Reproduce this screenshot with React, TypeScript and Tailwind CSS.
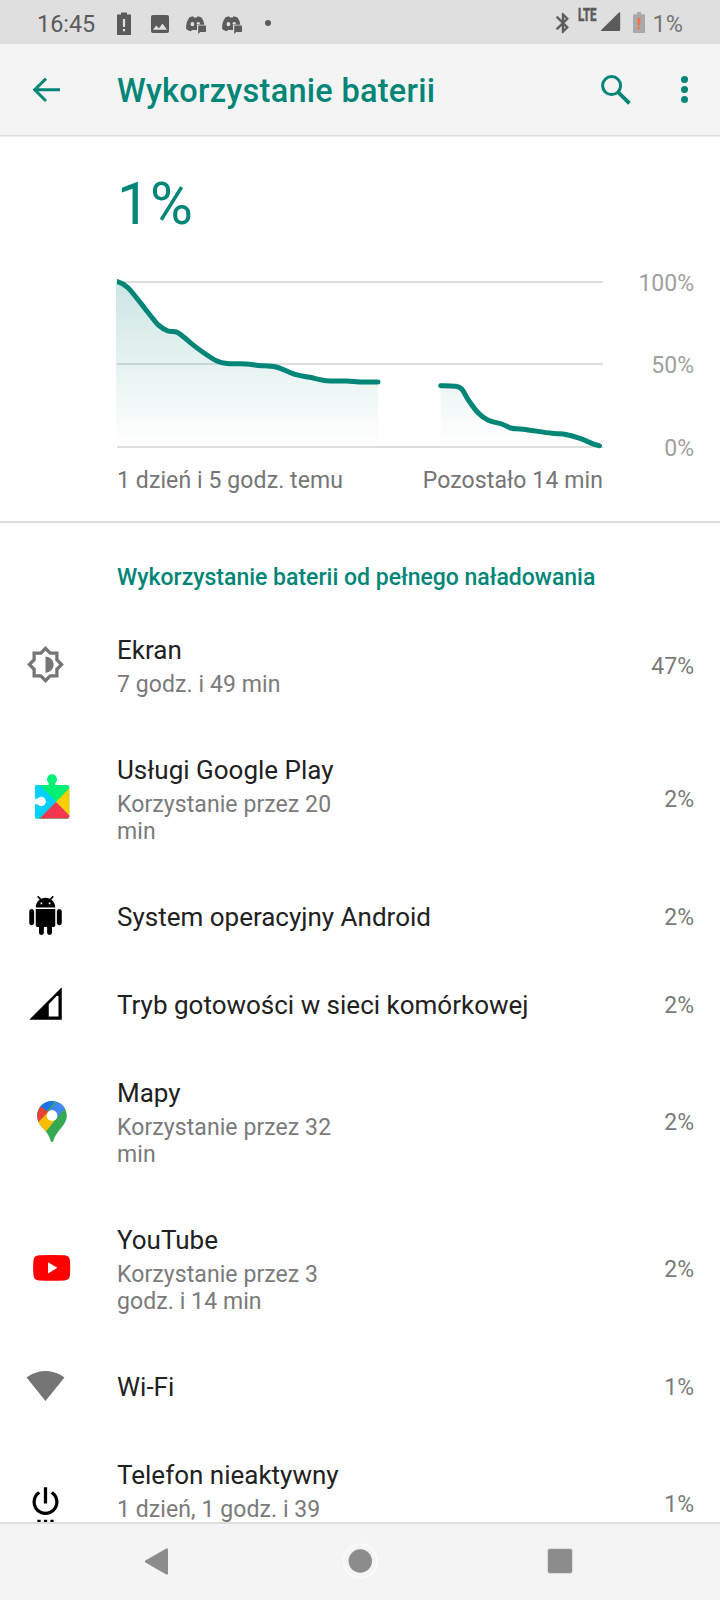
import type { ReactNode } from "react";

type Point = [number, number];

const firstRun: Point[] = [
  [0, 5.2], [12, 11.7], [32, 36.5], [42.5, 49.2], [52, 55], [62, 56.7], [74, 66.4], [87, 76.3],
  [100.5, 84.8], [111, 87.6], [130, 87.9], [142.5, 89.5], [160, 91], [179, 98.4], [194, 101.3],
  [210.5, 104.7], [230.5, 105], [244, 106], [262, 106],
];

const secondRun: Point[] = [
  [324.7, 109.7], [339, 110.2], [345.7, 113], [352.3, 124], [362.3, 137], [372.3, 144.3],
  [385.7, 148], [395.7, 152.3], [407.3, 153.3], [435.7, 157.3], [447.3, 158], [464, 162.3],
  [475.7, 167.3], [483.5, 169.8],
];

function curve(points: Point[]): string {
  let d = `M${points[0][0]} ${points[0][1]}`;
  for (let i = 0; i < points.length - 1; i++) {
    const a = points[Math.max(i - 1, 0)];
    const b = points[i];
    const c = points[i + 1];
    const e = points[Math.min(i + 2, points.length - 1)];
    d += `C${b[0] + (c[0] - a[0]) / 6} ${b[1] + (c[1] - a[1]) / 6} ${c[0] - (e[0] - b[0]) / 6} ${
      c[1] - (e[1] - b[1]) / 6
    } ${c[0]} ${c[1]}`;
  }
  return d;
}

function area(points: Point[]): string {
  return `${curve(points)}V170H${points[0][0]}Z`;
}

function Glyph({ d, className }: { d: string; className: string }) {
  return (
    <svg viewBox="0 0 24 24" className={`block h-[39px] w-[39px] ${className}`} fill="currentColor" fillRule="evenodd">
      <path d={d} />
    </svg>
  );
}

function PlayServicesIcon() {
  return (
    <svg viewBox="0 0 52 52" className="block h-[52px] w-[52px]">
      <defs>
        <clipPath id="ps-square">
          <rect x="9" y="13" width="34.3" height="33.7" rx="2" />
        </clipPath>
      </defs>
      <circle cx="26" cy="7.2" r="5" fill="#00f076" />
      <path d="M22.8 9H29.2V14H22.8Z" fill="#00f076" />
      <g clipPath="url(#ps-square)">
        <rect x="9" y="13" width="35" height="34" fill="#00f076" />
        <path d="M9 13H13.5L30.5 30L13.3 46.8H9Z" fill="#00cfff" />
        <path d="M44 15.5V44.5L29.8 30Z" fill="#ffce00" />
        <path d="M30 30L13.3 46.8H44V44Z" fill="#f5384f" />
        <circle cx="15.2" cy="29.5" r="4.7" fill="#fff" />
        <path d="M8 26.8H13V32.2H8Z" fill="#fff" />
      </g>
    </svg>
  );
}

function MapsIcon() {
  return (
    <svg viewBox="0 0 52 52" className="block h-[52px] w-[52px]">
      <defs>
        <clipPath id="maps-pin">
          <path d="M26 6C17.8 6 11.3 12.5 11.3 20.6C11.3 25.6 13.2 29.2 16.3 32.6C20.5 37.2 23.2 40.6 24.6 45.4C25.1 47.4 26.9 47.4 27.4 45.4C28.8 40.6 31.6 37.2 35.8 32.2C39 28.4 40.8 25 40.8 20.6C40.8 12.5 34.2 6 26 6Z" />
        </clipPath>
      </defs>
      <g clipPath="url(#maps-pin)">
        <rect width="52" height="52" fill="#34a853" />
        <path d="M8 0H34L8 32Z" fill="#1a73e8" />
        <path d="M31 6L52 2L38 14.5L30 24L22 17Z" fill="#4285f4" />
        <path d="M8 6L14.8 11.4L22.4 17L13 28L6 28Z" fill="#ea4335" />
        <path d="M22.1 17L30 24.1L20 36.4L10 30L12.5 27Z" fill="#fbbc04" />
      </g>
      <circle cx="26.1" cy="20.5" r="5.4" fill="#fff" />
    </svg>
  );
}

function YouTubeIcon() {
  return (
    <svg viewBox="0 0 52 52" className="block h-[52px] w-[52px]">
      <path
        d="M13 13.3Q25.7 12.7 38.4 13.3Q43.4 13.5 43.9 18.2Q44.6 25.8 43.9 33.6Q43.4 38.2 38.4 38.4Q25.7 39 13 38.4Q8 38.2 7.5 33.6Q6.8 25.8 7.5 18.2Q8 13.5 13 13.3Z"
        fill="#f00"
      />
      <path d="M22 20.2L31.4 25.8L22 31.4Z" fill="#fff" />
    </svg>
  );
}

const displayPath =
  "M20 8.69V4h-4.69L12 .69 8.69 4H4v4.69L.69 12 4 15.31V20h4.69L12 23.31 15.31 20H20v-4.69L23.31 12 20 8.69zm-2 5.79V18h-3.52L12 20.48 9.52 18H6v-3.52L3.52 12 6 9.52V6h3.52L12 3.52 14.48 6H18v3.52L20.48 12 18 14.48zM12 7v10c2.76 0 5-2.24 5-5s-2.24-5-5-5z";
const androidPath =
  "M6 18c0 .55.45 1 1 1h1v3.5c0 .83.67 1.5 1.5 1.5s1.5-.67 1.5-1.5V19h2v3.5c0 .83.67 1.5 1.5 1.5s1.5-.67 1.5-1.5V19h1c.55 0 1-.45 1-1V8H6v10zM3.5 8C2.67 8 2 8.67 2 9.5v7c0 .83.67 1.5 1.5 1.5S5 17.33 5 16.5v-7C5 8.67 4.33 8 3.5 8zm17 0c-.83 0-1.5.67-1.5 1.5v7c0 .83.67 1.5 1.5 1.5s1.5-.67 1.5-1.5v-7c0-.83-.67-1.5-1.5-1.5zm-4.97-5.84l1.3-1.3c.2-.2.2-.51 0-.71-.2-.2-.51-.2-.71 0l-1.48 1.48C13.85 1.23 12.95 1 12 1c-.96 0-1.86.23-2.66.63L7.85.15c-.2-.2-.51-.2-.71 0-.2.2-.2.51 0 .71l1.31 1.31C6.97 3.26 6 5.01 6 7h12c0-1.99-.97-3.75-2.47-4.84zM10 5H9V4h1v1zm5 0h-1V4h1v1z";
const cellPath = "M2 22H22V2ZM14 20V12.4L18.8 7.4H20V20Z";
const wifiPath =
  "M12.01 21.49L23.64 7c-.45-.34-4.93-4-11.64-4C5.28 3 .81 6.66.36 7l11.63 14.49.01.01.01-.01z";
const powerPath =
  "M7 24h2v-2H7v2zm4 0h2v-2h-2v2zm2-22h-2v10h2V2zm3.56 2.44l-1.45 1.45C16.84 6.94 18 8.83 18 11c0 3.31-2.69 6-6 6s-6-2.69-6-6c0-2.17 1.16-4.06 2.88-5.12L7.44 4.44C5.36 5.88 4 8.28 4 11c0 4.42 3.58 8 8 8s8-3.58 8-8c0-2.72-1.36-5.12-3.44-6.56zM15 24h2v-2h-2v2z";

type Row = { icon: ReactNode; title: string; summary?: string[]; percent: string };

const rows: Row[] = [
  { icon: <Glyph d={displayPath} className="text-[#757575]" />, title: "Ekran", summary: ["7 godz. i 49 min"], percent: "47%" },
  { icon: <PlayServicesIcon />, title: "Usługi Google Play", summary: ["Korzystanie przez 20", "min"], percent: "2%" },
  { icon: <Glyph d={androidPath} className="text-black" />, title: "System operacyjny Android", percent: "2%" },
  { icon: <Glyph d={cellPath} className="text-black" />, title: "Tryb gotowości w sieci komórkowej", percent: "2%" },
  { icon: <MapsIcon />, title: "Mapy", summary: ["Korzystanie przez 32", "min"], percent: "2%" },
  { icon: <YouTubeIcon />, title: "YouTube", summary: ["Korzystanie przez 3", "godz. i 14 min"], percent: "2%" },
  { icon: <Glyph d={wifiPath} className="text-[#757575]" />, title: "Wi-Fi", percent: "1%" },
  { icon: <Glyph d={powerPath} className="text-black" />, title: "Telefon nieaktywny", summary: ["1 dzień, 1 godz. i 39", "\u00a0"], percent: "1%" },
];

function UsageRow({ icon, title, summary, percent }: Row) {
  return (
    <div className="flex shrink-0 items-center py-[28.5px] pr-[26px] pl-[26px]">
      <div className="-my-3 w-[91px] shrink-0 pb-[3px]">{icon}</div>
      <div className="flex-1">
        <div className="text-[26px] leading-[31px] text-[#212121]">{title}</div>
        {summary && (
          <div className="mt-[5px] text-[23px] leading-[27px] tracking-[0.08px] text-[#7a7a7a]">
            {summary.map((line) => (
              <div key={line}>{line}</div>
            ))}
          </div>
        )}
      </div>
      <div className="text-[23px] leading-[27px] text-[#7a7a7a]">{percent}</div>
    </div>
  );
}

function DiscordIcon() {
  return (
    <svg viewBox="0 0 22 20" className="block h-[20px] w-[22px]" fill="#5b5b5b">
      <path
        fillRule="evenodd"
        d="M4.5 2.2L8 1.3L8.8 2.4H11.8L12.6 1.3L16.2 2.2C18 4.5 19 7 19.3 9.8H12V15H7.2L5.6 16.2C3.8 15.8 2.2 15 1.2 14C.9 9.6 1.8 5.6 4.5 2.2ZM7.4 7.1A1.9 2.1 0 1 0 7.4 11.3A1.9 2.1 0 1 0 7.4 7.1ZM13.2 7.1A1.8 2 0 0 0 11.5 9.3H15A1.8 2 0 0 0 13.2 7.1Z"
      />
      <path d="M13 10.6H20.3Q21 10.6 21 11.3V16.2Q21 16.9 20.3 16.9H15.3L13.2 19V16.9V10.6Z" />
    </svg>
  );
}

function StatusBar() {
  return (
    <div className="flex h-[44px] shrink-0 items-start bg-[#dfdfdf] pl-[37px]">
      <div className="mt-[10px] w-[79px] text-[23.4px] leading-[28px] text-[#5b5b5b]">16:45</div>
      <svg viewBox="0 0 16 24" className="mt-[12px] block h-[24px] w-[16px]" fill="#5b5b5b">
        <path fillRule="evenodd" d="M5 .5H11V2.5H15V23H1V2.5H5ZM6.9 7V15H9.1V7ZM6.9 17V19.3H9.1V17Z" />
      </svg>
      <svg viewBox="0 0 18 18" className="mt-[15px] ml-[19px] block h-[18px] w-[18px]" fill="#5b5b5b">
        <path fillRule="evenodd" d="M2 0H16Q18 0 18 2V16Q18 18 16 18H2Q0 18 0 16V2Q0 0 2 0ZM5.2 10.4L2 14.8H16L11.5 8.6L8 13.3Z" />
      </svg>
      <div className="mt-[15px] ml-[16px]">
        <DiscordIcon />
      </div>
      <div className="mt-[15px] ml-[14px]">
        <DiscordIcon />
      </div>
      <div className="mt-[20px] ml-[22px] h-[6px] w-[6px] rounded-full bg-[#5b5b5b]" />
      <div className="flex-1" />
      <svg viewBox="0 0 24 24" className="mt-[11px] block h-[24px] w-[24px]" fill="#5b5b5b">
        <path
          stroke="#5b5b5b"
          strokeWidth=".4"
          d="M17.71 7.71L12 2h-1v7.59L6.41 5 5 6.41 10.59 12 5 17.59 6.41 19 11 14.41V22h1l5.71-5.71-4.3-4.29 4.3-4.29zM13 5.83l1.88 1.88L13 9.59V5.83zm1.88 10.46L13 18.17v-3.76l1.88 1.88z"
        />
      </svg>
      <div className="mt-[7px] ml-[3px] h-[17px] w-[20px]">
        <div className="w-max origin-left scale-x-[0.66] text-[17.5px] leading-[17px] font-bold text-[#5b5b5b] [-webkit-text-stroke:0.6px_#5b5b5b]">
          LTE
        </div>
      </div>
      <svg viewBox="0 0 20 20" className="mt-[12px] ml-[3px] block h-[20px] w-[20px]" fill="#5b5b5b">
        <path d="M0 18.3L18.2 .3Q19.2 -.2 19.2 1V18Q19.2 19 18.2 19H.6Q-.3 19 0 18.3Z" />
      </svg>
      <svg viewBox="0 0 12 21" className="mt-[12px] ml-[12px] block h-[21px] w-[12px]">
        <path d="M4 0H8V2.2H11Q12 2.2 12 3.2V20Q12 21 11 21H1Q0 21 0 20V3.2Q0 2.2 1 2.2H4Z" fill="#a9a9a9" />
        <path d="M4.7 6H7.3V13.5H4.7ZM4.7 15.3H7.3V17.3H4.7Z" fill="#ff6e40" />
      </svg>
      <div className="mt-[10px] mr-[37px] ml-[8px] text-[23.5px] leading-[28px] text-[#757575]">1%</div>
    </div>
  );
}

function Header() {
  return (
    <header className="flex h-[91px] shrink-0 items-center bg-[#f4f4f4] text-[#008577] shadow-[0_1px_2px_rgba(0,0,0,0.2)]">
      <svg viewBox="0 0 30 26" className="ml-[31px] block h-[26px] w-[30px]" fill="none" stroke="currentColor" strokeWidth="3">
        <path d="M29 12.8H4M15 1.6L3.7 12.8L15 24" />
      </svg>
      <h1 className="ml-[56px] flex-1 pt-[2px] text-[32.5px] leading-[38px] font-medium tracking-[0.27px]">
        Wykorzystanie baterii
      </h1>
      <svg viewBox="0 0 30 30" className="block h-[30px] w-[30px]" fill="none" stroke="currentColor">
        <circle cx="10.6" cy="10.6" r="9" strokeWidth="3" />
        <path d="M17.6 17.6L28.4 28.4" strokeWidth="3.8" />
      </svg>
      <div className="mr-[32px] ml-[50px] flex flex-col gap-[3px]">
        <span className="h-[6.8px] w-[6.8px] rounded-full bg-current" />
        <span className="h-[6.8px] w-[6.8px] rounded-full bg-current" />
        <span className="h-[6.8px] w-[6.8px] rounded-full bg-current" />
      </div>
    </header>
  );
}

function BatteryChart() {
  return (
    <svg viewBox="0 0 488 174" className="block h-[174px] w-[488px]">
      <defs>
        <linearGradient id="fill" x1="0" y1="5" x2="0" y2="170" gradientUnits="userSpaceOnUse">
          <stop offset="0" stopColor="#008577" stopOpacity="0.2" />
          <stop offset="1" stopColor="#008577" stopOpacity="0" />
        </linearGradient>
        <clipPath id="plot">
          <rect x="1" y="0" width="487" height="174" />
        </clipPath>
      </defs>
      <path d="M1 6H487M1 88H487M1 171H487" stroke="#dedede" strokeWidth="2" />
      <path d={area(firstRun)} fill="url(#fill)" />
      <path d={area(secondRun)} fill="url(#fill)" />
      <g clipPath="url(#plot)" fill="none" stroke="#008577" strokeWidth="5" strokeLinecap="round">
        <path d={curve(firstRun)} />
        <path d={curve(secondRun)} />
      </g>
    </svg>
  );
}

function Summary() {
  return (
    <section className="flex h-[388px] shrink-0 flex-col border-b-2 border-[#dedede] pl-[116px]">
      <div className="mt-[35px] h-[68px] pl-px text-[58.5px] leading-[68px] text-[#008577]">1%</div>
      <div className="mt-[38px] flex h-[174px]">
        <BatteryChart />
        <div className="-mt-[6px] flex flex-1 flex-col pr-[26px] text-right text-[23px] leading-[27px] text-[#a0a0a0]">
          <span>100%</span>
          <span className="mt-[55px]">50%</span>
          <span className="mt-[56px]">0%</span>
        </div>
      </div>
      <div className="mt-[17px] flex w-[487px] justify-between pl-px text-[23px] leading-[27px] tracking-[0.1px] text-[#757575]">
        <span>1 dzień i 5 godz. temu</span>
        <span>Pozostało 14 min</span>
      </div>
    </section>
  );
}

function NavBar() {
  return (
    <nav className="flex h-[78px] shrink-0 items-center border-t-2 border-[#dedede] bg-[#f4f4f4] pb-[2px]">
      <svg viewBox="0 0 24 27" className="ml-[144px] block h-[27px] w-[24px]" fill="#8c8c8c">
        <path d="M22.3 .4Q24 0 24 1.8V25.2Q24 27 22.3 26.5L1.4 14.4Q.2 13.5 1.4 12.5Z" />
      </svg>
      <svg viewBox="0 0 36 36" className="ml-[174px] block h-[36px] w-[36px]">
        <circle cx="18.3" cy="18" r="16.8" fill="#f4f4f4" stroke="#fbfbfb" strokeWidth="1.8" />
        <circle cx="18.3" cy="18" r="11.7" fill="#8c8c8c" />
      </svg>
      <div className="ml-[170px] h-[24px] w-[24px] rounded-[2px] bg-[#8c8c8c] shadow-[0_0_1px_1px_#dcdcdc]" />
    </nav>
  );
}

export default function App() {
  return (
    <div className="flex h-[1600px] w-[720px] flex-col overflow-hidden bg-white font-[Roboto,sans-serif]">
      <StatusBar />
      <Header />
      <main className="flex min-h-0 flex-1 flex-col overflow-hidden">
        <Summary />
        <h2 className="mt-[41px] mb-[15px] shrink-0 pl-[117px] text-[23px] leading-[27px] font-medium text-[#008577]">
          Wykorzystanie baterii od pełnego naładowania
        </h2>
        {rows.map((row) => (
          <UsageRow key={row.title} {...row} />
        ))}
      </main>
      <NavBar />
    </div>
  );
}
